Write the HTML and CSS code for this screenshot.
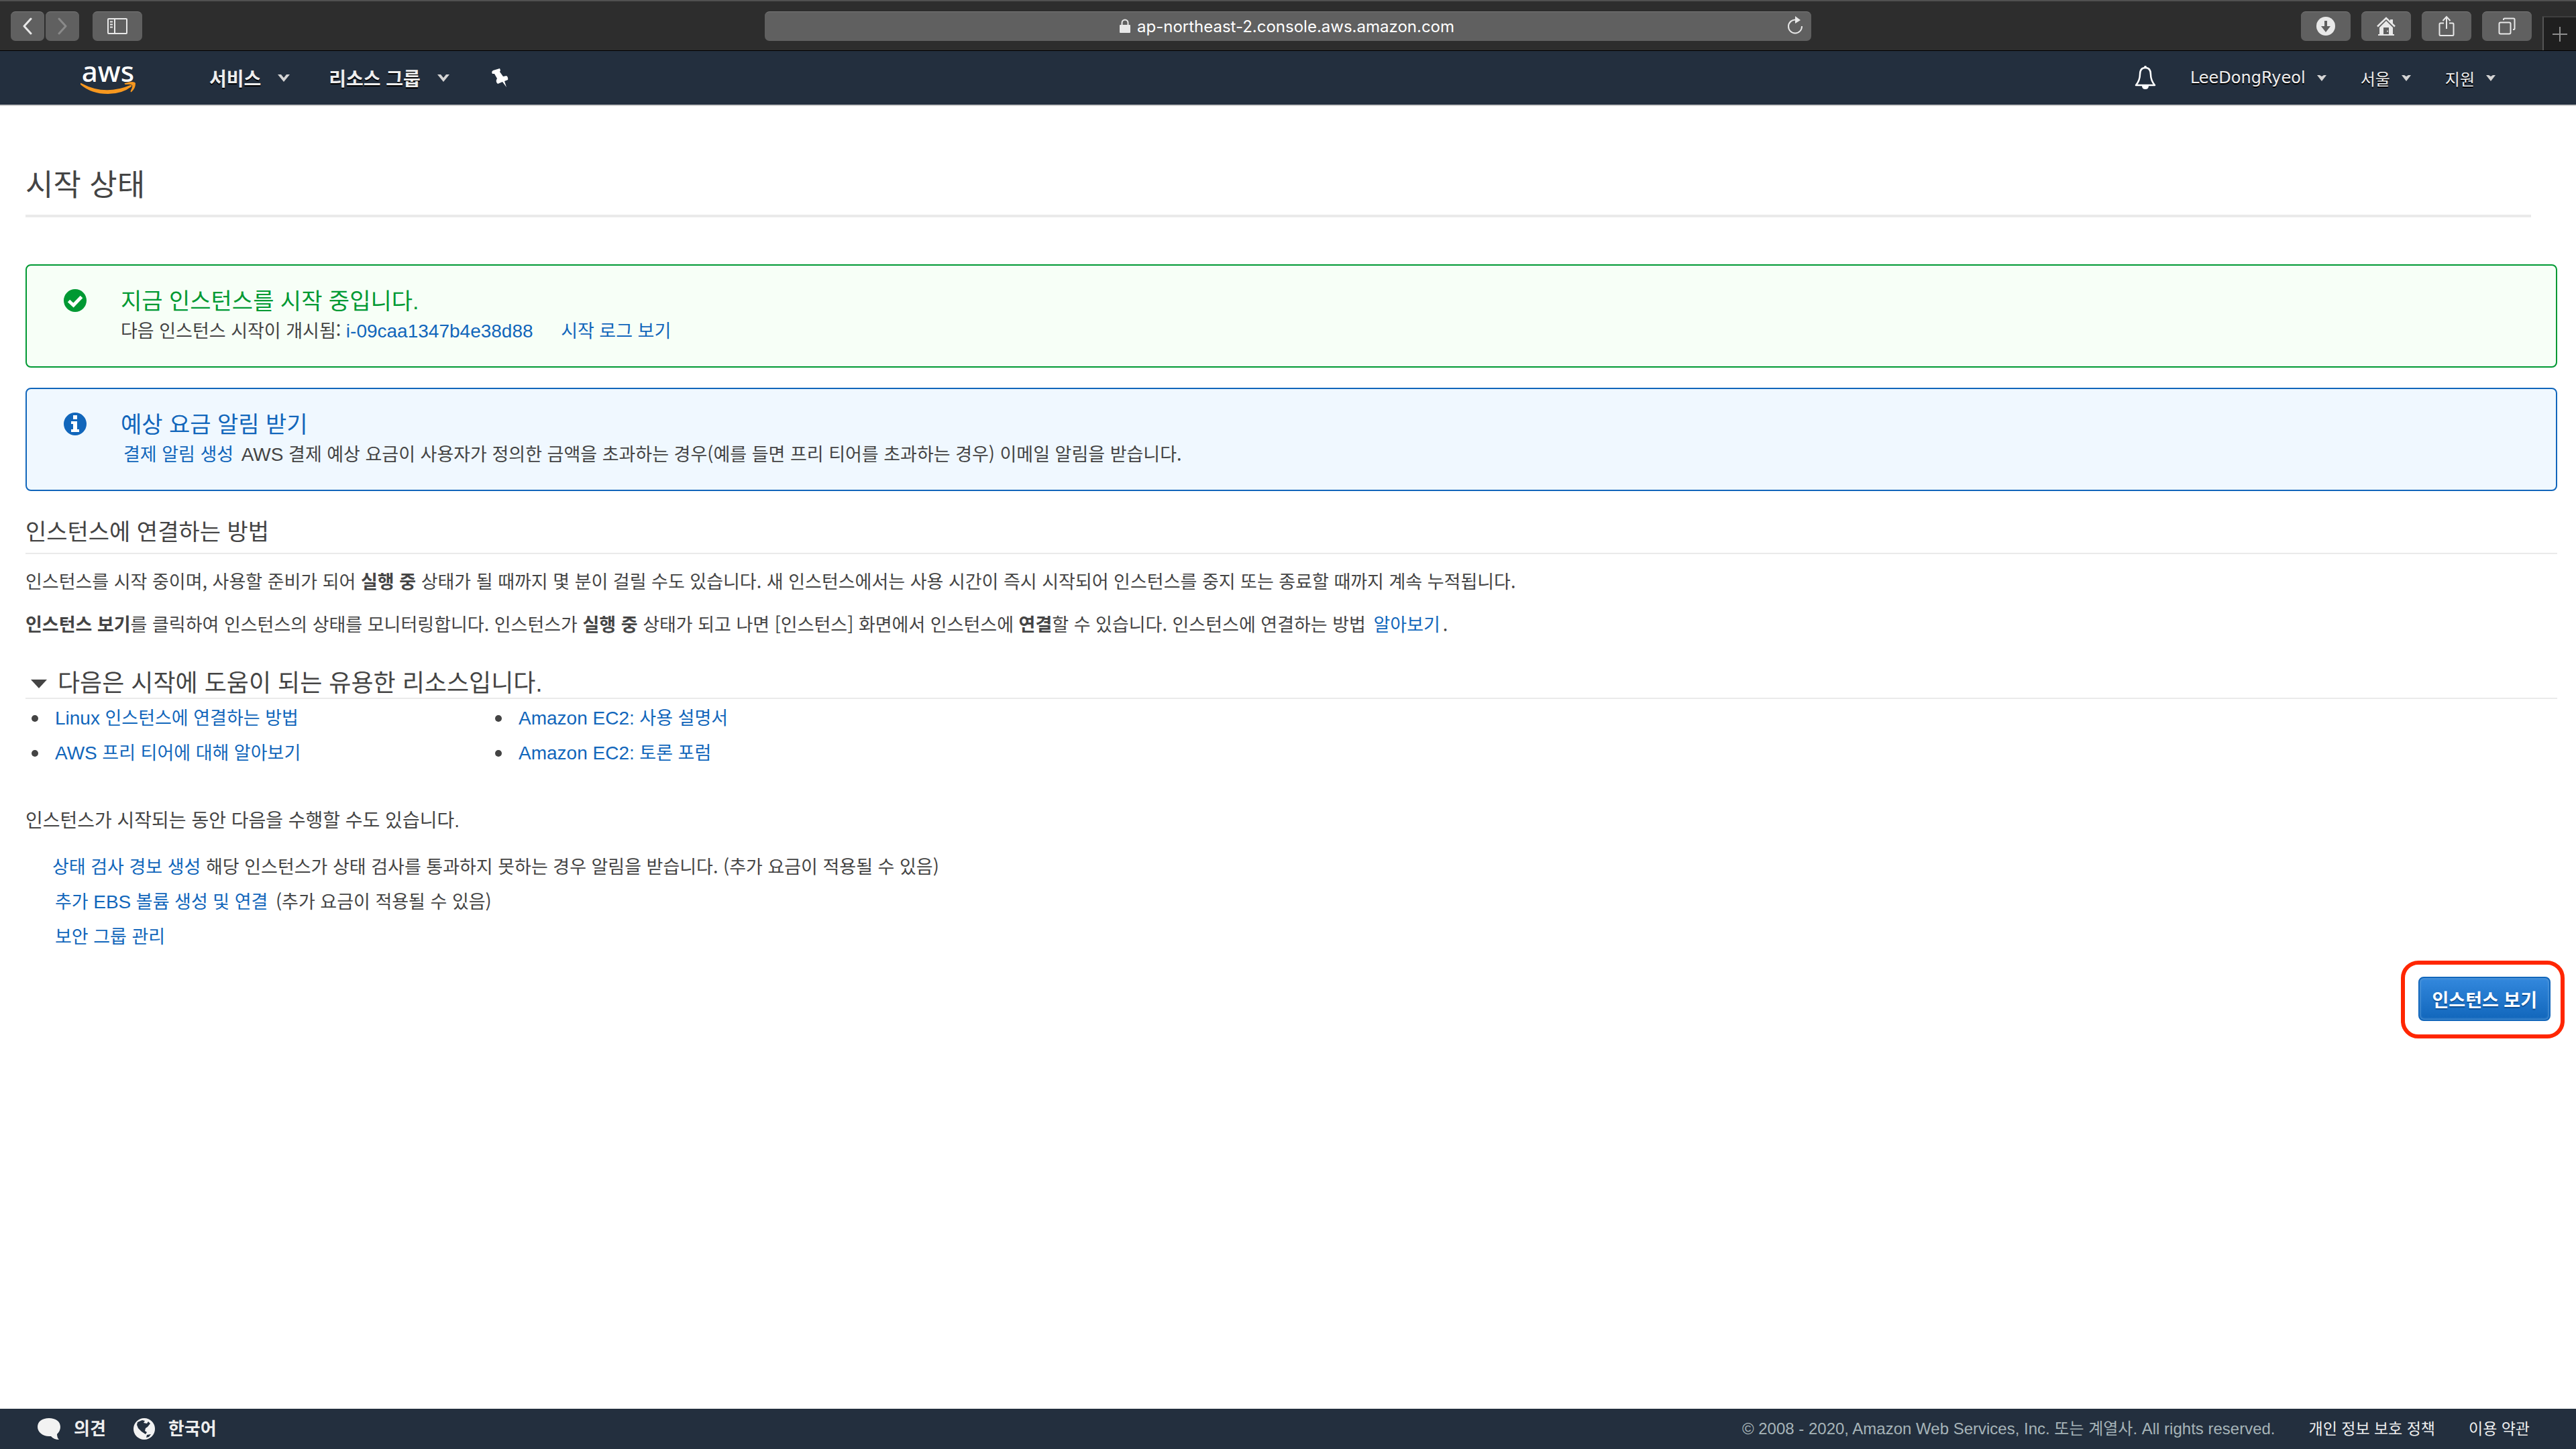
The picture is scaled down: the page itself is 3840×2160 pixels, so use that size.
FILE: index.html
```
<!DOCTYPE html>
<html lang="ko">
<head>
    <meta charset="UTF-8">
    <meta name="viewport" content="width=device-width, initial-scale=1.0">
    <title>시작 상태</title>
    <link rel="stylesheet" href="styles.css">
</head>
<body>
    <!-- Browser toolbar -->
    <div class="toolbar">
        <div class="tool-group">
            <div class="history">
                <button class="tool-btn nav" aria-label="Back">
                    <svg width="16" height="26" viewBox="0 0 16 26"><path d="M13 2L3 13L13 24" fill="none" stroke="#e8e8e8" stroke-width="3" stroke-linecap="round" stroke-linejoin="round"/></svg>
                </button>
                <button class="tool-btn nav" aria-label="Forward">
                    <svg width="16" height="26" viewBox="0 0 16 26"><path d="M3 2L13 13L3 24" fill="none" stroke="#8a8a8a" stroke-width="3" stroke-linecap="round" stroke-linejoin="round"/></svg>
                </button>
            </div>
            <button class="tool-btn" aria-label="Sidebar">
                <svg width="30" height="24" viewBox="0 0 30 24" fill="none" stroke="#e8e8e8" stroke-width="2"><rect x="1" y="1" width="28" height="22" rx="1"/><path d="M11 1V23M4 5.500H8M4 9.500H8M4 13.500H8"/></svg>
            </button>
        </div>
        <div class="address">
            <svg class="lock" width="16" height="22" viewBox="0 0 16 22"><rect x="0" y="9" width="16" height="12" rx="1" fill="#e8e8e8"/><path d="M3.500 10V6a4.500 4.500 0 0 1 9 0V10" fill="none" stroke="#e8e8e8" stroke-width="2"/></svg>
            <input class="url" type="text" value="ap-northeast-2.console.aws.amazon.com" aria-label="Address">
            <button class="reload" aria-label="Reload">
                <svg width="24" height="28" viewBox="0 0 24 28"><path d="M13 5.500A10 10 0 1 0 22 15" fill="none" stroke="#e8e8e8" stroke-width="2"/><path d="M12 0L20 6L12 11Z" fill="#e8e8e8"/></svg>
            </button>
        </div>
        <div class="tool-group right">
            <button class="tool-btn" aria-label="Downloads">
                <svg width="28" height="28" viewBox="0 0 28 28"><circle cx="14" cy="14" r="14" fill="#e8e8e8"/><path d="M12 6H16V14H21L14 23L7 14H12Z" fill="#5f5f5f"/></svg>
            </button>
            <button class="tool-btn" aria-label="Home">
                <svg width="28" height="28" viewBox="0 0 28 28"><path d="M1 14.500L14 2L27 14.500" fill="none" stroke="#e8e8e8" stroke-width="2.500"/><path d="M20 4H24V11L20 7ZM14 6L24 16V26H26V28H2V26H4V16Z" fill="#e8e8e8"/><path d="M10 16H18V26H10Z" fill="#5f5f5f"/><circle cx="16" cy="21.500" r="1" fill="#e8e8e8"/></svg>
            </button>
            <button class="tool-btn" aria-label="Share">
                <svg width="24" height="32" viewBox="0 0 24 32" fill="none" stroke="#e8e8e8" stroke-width="2"><path d="M8 11.500H3Q1.500 11.500 1.500 13V28.500Q1.500 30 3 30H21Q22.500 30 22.500 28.500V13Q22.500 11.500 21 11.500H16M12 20V2M6.500 8L12 2L17.500 8"/></svg>
            </button>
            <button class="tool-btn" aria-label="Tabs">
                <svg width="26" height="26" viewBox="0 0 26 26" fill="none" stroke="#e8e8e8" stroke-width="2"><rect x="1.500" y="7.500" width="17" height="17" rx="2"/><path d="M8 4V3Q8 1.500 9.500 1.500H23Q24.500 1.500 24.500 3V16.500Q24.500 18 23 18H22"/></svg>
            </button>
            <button class="new-tab" aria-label="New tab">
                <svg width="22" height="22" viewBox="0 0 22 22"><path d="M11 0V22M0 11H22" stroke="#8e8e8e" stroke-width="2"/></svg>
            </button>
        </div>
    </div>

    <!-- Console navigation -->
    <header class="nav-bar">
        <a class="logo" href="#">
            <span class="logo-text">aws</span>
            <svg class="smile" width="82" height="20" viewBox="0 0 82 20" fill="#f7981f"><path d="M1 2Q36 21 74 5Q77 4 76 7Q62 18 41 18Q16 18 0 4Q-1 1 1 2Z"/><path d="M66 2Q80 -2 82 2Q82 10 76 15Q74 16 75 13Q78 7 77 5Q75 3 67 4Q65 3 66 2Z"/></svg>
        </a>
        <nav class="menu">
            <button class="menu-btn">서비스 <svg width="18" height="11" viewBox="0 0 18 11"><path d="M0 0H5L9 5L13 0H18L9 11Z" fill="#d4d4d4"/></svg></button>
            <button class="menu-btn">리소스 그룹 <svg width="18" height="11" viewBox="0 0 18 11"><path d="M0 0H5L9 5L13 0H18L9 11Z" fill="#d4d4d4"/></svg></button>
            <button class="menu-btn pin" aria-label="Pin">
                <svg width="25" height="28" viewBox="0 0 25 28" fill="#fff"><path d="M12 0L13 3L12 5L17 12L22 11Q25 13 24 17L19 19L22 28L16 20L9 23Q6 21 7 17L8 15L4 8L1 8Q-1 5 2 3Z"/></svg>
            </button>
        </nav>
        <div class="account">
            <button class="acc-btn" aria-label="Notifications">
                <svg width="32" height="36" viewBox="0 0 32 36"><path d="M16 3C10 3 8 7 8 13C8 20 6 24 2 29H30C26 24 24 20 24 13C24 7 22 3 16 3Z" fill="none" stroke="#fff" stroke-width="2.500" stroke-linejoin="round"/><circle cx="16" cy="2" r="2" fill="#fff"/><path d="M11 30H21Q21 35 16 35Q11 35 11 30Z" fill="#fff"/></svg>
            </button>
            <button class="acc-btn">LeeDongRyeol <svg width="14" height="9" viewBox="0 0 14 9"><path d="M0 0H4L7 2L10 0H14L7 9Z" fill="#d4d4d4"/></svg></button>
            <button class="acc-btn">서울 <svg width="14" height="9" viewBox="0 0 14 9"><path d="M0 0H4L7 2L10 0H14L7 9Z" fill="#d4d4d4"/></svg></button>
            <button class="acc-btn">지원 <svg width="14" height="9" viewBox="0 0 14 9"><path d="M0 0H4L7 2L10 0H14L7 9Z" fill="#d4d4d4"/></svg></button>
        </div>
    </header>

    <main class="content">
        <h1>시작 상태</h1>

        <section class="alert success">
            <svg class="alert-icon" width="34" height="34" viewBox="0 0 34 34"><circle cx="17" cy="17" r="17" fill="#009933"/><path d="M7.500 17.500L14.500 24L26.500 11.500" fill="none" stroke="#fff" stroke-width="5"/></svg>
            <div>
                <h2 class="alert-title">지금 인스턴스를 시작 중입니다.</h2>
                <p>다음 인스턴스 시작이 개시됨: <a class="latin" href="#">i-09caa1347b4e38d88</a> <a class="log-link" href="#">시작 로그 보기</a></p>
            </div>
        </section>

        <section class="alert info">
            <svg class="alert-icon" width="34" height="34" viewBox="0 0 34 34"><circle cx="17" cy="17" r="17" fill="#1166bb"/><path d="M14 4H20V10H14ZM11 13H20V25H23V29H11V25H14V17H11Z" fill="#fff"/></svg>
            <div>
                <h2 class="alert-title">예상 요금 알림 받기</h2>
                <p><a class="spaced" href="#">결제 알림 생성</a> <span class="latin">AWS</span> 결제 예상 요금이 사용자가 정의한 금액을 초과하는 경우(예를 들면 프리 티어를 초과하는 경우) 이메일 알림을 받습니다.</p>
            </div>
        </section>

        <h2 class="section-title">인스턴스에 연결하는 방법</h2>
        <p>인스턴스를 시작 중이며, 사용할 준비가 되어 <b>실행 중</b> 상태가 될 때까지 몇 분이 걸릴 수도 있습니다. 새 인스턴스에서는 사용 시간이 즉시 시작되어 인스턴스를 중지 또는 종료할 때까지 계속 누적됩니다.</p>
        <p><b>인스턴스 보기</b>를 클릭하여 인스턴스의 상태를 모니터링합니다. 인스턴스가 <b>실행 중</b> 상태가 되고 나면 [인스턴스] 화면에서 인스턴스에 <b>연결</b>할 수 있습니다. 인스턴스에 연결하는 방법 <a class="spaced" href="#">알아보기</a>.</p>

        <details class="resources" open>
            <summary><svg width="24" height="13" viewBox="0 0 24 13"><path d="M0 0H24L12 13Z" fill="#444"/></svg>다음은 시작에 도움이 되는 유용한 리소스입니다.</summary>
            <div class="columns">
                <ul>
                    <li><a href="#"><span class="latin">Linux</span> 인스턴스에 연결하는 방법</a></li>
                    <li><a href="#"><span class="latin">AWS</span> 프리 티어에 대해 알아보기</a></li>
                </ul>
                <ul>
                    <li><a href="#"><span class="latin">Amazon EC2:</span> 사용 설명서</a></li>
                    <li><a href="#"><span class="latin">Amazon EC2:</span> 토론 포럼</a></li>
                </ul>
            </div>
        </details>

        <p class="lead">인스턴스가 시작되는 동안 다음을 수행할 수도 있습니다.</p>
        <ul class="tasks">
            <li><a href="#">상태 검사 경보 생성</a> 해당 인스턴스가 상태 검사를 통과하지 못하는 경우 알림을 받습니다. (추가 요금이 적용될 수 있음)</li>
            <li><a class="spaced" href="#">추가 <span class="latin">EBS</span> 볼륨 생성 및 연결</a> (추가 요금이 적용될 수 있음)</li>
            <li><a class="spaced" href="#">보안 그룹 관리</a></li>
        </ul>
    </main>

    <div class="actions">
        <div class="highlight">
            <button class="primary">인스턴스 보기</button>
        </div>
    </div>

    <footer class="footer">
        <a class="foot-btn" href="#">
            <svg width="34" height="34" viewBox="0 0 34 34" fill="#f2f2f2"><path d="M17 1C7 1 0 6 0 14C0 22 8 28 17 28L20 28Q24 33 32 33Q29 30 29 25Q34 20 34 14C34 6 27 1 17 1Z"/></svg>
            의견
        </a>
        <a class="foot-btn" href="#">
            <svg width="32" height="32" viewBox="0 0 32 32"><circle cx="16" cy="16" r="16" fill="#f2f2f2"/><path d="M6 6L13 3L17 4L15 7L20 8L22 5L25 8L21 13L18 15L17 19L20 21L18 24L12 20L7 15L5 10ZM20 25L26 24L23 28L19 29Z" fill="#232f3e"/></svg>
            한국어
        </a>
        <span class="copyright">© 2008 - 2020, Amazon Web Services, Inc. 또는 계열사. All rights reserved.</span>
        <a class="policy" href="#">개인 정보 보호 정책</a>
        <a class="policy" href="#">이용 약관</a>
    </footer>
</body>
</html>
```
FILE: styles.css
```
* {
    box-sizing: border-box;
}
body {
    margin: 0;
    min-height: 100vh;
    display: flex;
    flex-direction: column;
    background-color: #fff;
    color: #444;
    font-family: "Liberation Sans", "Noto Sans CJK KR", sans-serif;
    font-size: 26px;
    line-height: 40px;
}
a {
    color: #1166bb;
    text-decoration: none;
}
button {
    font-family: inherit;
    border: 0;
    padding: 0;
    background: none;
    cursor: pointer;
}
svg {
    display: block;
    flex: none;
}
h1, h2, p, ul {
    margin: 0;
    padding: 0;
    font-weight: normal;
}
p, li {
    font-family: "Noto Sans CJK KR", sans-serif;
    font-size: 27px;
}
/* Latin words sit inside Korean text, line-height 1 keeps the row height */
.latin {
    font-family: "Liberation Sans", sans-serif;
    font-size: 28px;
    line-height: 1;
}

/* Browser toolbar */
.toolbar {
    display: flex;
    align-items: center;
    height: 76px;
    padding-left: 16px;
    background-color: #2d2d2d;
    border-top: 2px solid #505050;
    border-bottom: 1px solid #000;
}
.tool-group {
    flex: 1;
    display: flex;
    align-items: center;
    gap: 20px;
}
.tool-group.right {
    justify-content: flex-end;
    gap: 16px;
    align-self: stretch;
}
.history {
    display: flex;
    gap: 2px;
}
.tool-btn {
    display: flex;
    align-items: center;
    justify-content: center;
    width: 74px;
    height: 44px;
    border-radius: 7px;
    background-color: #606060;
    border-top: 1px solid #7a7a7a;
}
.tool-btn.nav {
    width: 50px;
}
.address {
    display: flex;
    align-items: center;
    justify-content: center;
    gap: 10px;
    position: relative;
    width: 1560px;
    height: 44px;
    margin-right: 16px;
    border-radius: 7px;
    background-color: #606060;
    border-top: 1px solid #7a7a7a;
}
.url {
    width: 476px;
    padding: 0;
    border: 0;
    background: none;
    color: #fff;
    font-family: Inter, sans-serif;
    font-size: 24px;
}
.reload {
    position: absolute;
    right: 12px;
    top: 6px;
}
.new-tab {
    display: flex;
    align-items: center;
    justify-content: center;
    width: 50px;
    height: 51px;
    align-self: flex-end;
    background-color: #1f1f1f;
    border-top: 2px solid #3e3e3e;
    border-left: 2px solid #555;
}

/* Console navigation */
.nav-bar {
    display: flex;
    align-items: center;
    height: 82px;
    padding: 0 120px;
    background-color: #232f3e;
    border-bottom: 2px solid #ccc;
}
.logo {
    display: flex;
    flex-direction: column;
    align-items: center;
    width: 82px;
    margin-right: 110px;
    color: #fff;
}
.logo-text {
    font-family: "Noto Sans", sans-serif;
    font-size: 42px;
    font-weight: 500;
    line-height: 32px;
}
.menu, .account {
    display: flex;
    align-items: center;
}
.menu {
    gap: 58px;
}
.menu-btn, .acc-btn {
    display: flex;
    align-items: center;
    color: #eee;
    text-shadow: 0 2px 0 #000;
}
.menu-btn {
    gap: 25px;
    font-size: 28px;
    font-weight: bold;
}
.pin {
    margin-left: 5px;
}
.account {
    margin-left: auto;
    gap: 51px;
}
.acc-btn {
    gap: 17px;
    font-family: "DejaVu Sans", "Noto Sans CJK KR", sans-serif;
    font-size: 24px;
}

/* Page content */
.content {
    padding: 89px 28px 0 38px;
}
h1 {
    margin-right: 39px;
    padding-bottom: 13px;
    border-bottom: 4px solid #eaeaea;
    font-size: 45px;
    line-height: 60px;
}
.alert {
    display: flex;
    margin-top: 30px;
    padding: 33px 55px 34px;
    border: 2px solid;
    border-radius: 8px;
}
h1 + .alert {
    margin-top: 70px;
}
.alert.success {
    border-color: #009933;
    background-color: #f7fff7;
}
.alert.info {
    border-color: #1166bb;
    background-color: #f0f8ff;
}
.alert-icon {
    margin: 2px 51px 0 0;
}
.alert-title {
    margin-bottom: 3px;
    font-size: 34px;
}
.success .alert-title {
    color: #009933;
}
.info .alert-title {
    color: #1166bb;
}
.log-link {
    margin-left: 34px;
}
.spaced {
    margin: 0 4px;
}
.section-title {
    margin-top: 39px;
    padding-bottom: 9px;
    border-bottom: 2px solid #eaeaea;
    font-size: 34px;
    line-height: 44px;
}
.section-title + p {
    margin: 20px 0 24px;
}
.resources {
    margin-top: 48px;
}
summary {
    display: flex;
    align-items: center;
    gap: 16px;
    padding-left: 8px;
    border-bottom: 2px solid #eaeaea;
    font-size: 36px;
    line-height: 42px;
    list-style: none;
}
.columns {
    display: flex;
    margin-top: 1px;
    line-height: 52px;
}
.columns ul {
    width: 691px;
    padding-left: 9px;
}
.columns li {
    display: flex;
    align-items: center;
    gap: 25px;
}
.columns li::before {
    content: "";
    width: 10px;
    height: 10px;
    margin-top: 4px;
    border-radius: 50%;
    background-color: #444;
}
.lead {
    margin-top: 57px;
    font-family: "Liberation Sans", "Noto Sans CJK KR", sans-serif;
    font-size: 28px;
}
.tasks {
    margin-top: 21px;
    padding-left: 40px;
    line-height: 52px;
    list-style: none;
}

/* Launch button */
.actions {
    display: flex;
    justify-content: flex-end;
    margin-top: 11px;
    padding-right: 17px;
}
.highlight {
    padding: 18px 15px 20px 20px;
    border: 6px solid #ff2600;
    border-radius: 26px;
}
.primary {
    height: 66px;
    padding: 0 18px;
    border: 2px solid #1166bb;
    border-radius: 8px;
    background: linear-gradient(#3388dd, #1166bb);
    box-shadow: inset 0 0 3px 1px #5a9bd8;
    color: #fff;
    font-size: 27px;
    font-weight: bold;
    text-shadow: 0 2px 1px #0f4f94;
}

/* Footer */
.footer {
    display: flex;
    align-items: center;
    height: 60px;
    margin-top: auto;
    padding: 0 69px 0 56px;
    background-color: #232f3e;
}
.foot-btn {
    display: flex;
    align-items: center;
    gap: 20px;
    margin-right: 41px;
    color: #eee;
    font-weight: bold;
}
.copyright {
    margin-left: auto;
    color: #a6b4b8;
    font-size: 24px;
}
.policy {
    margin-left: 50px;
    color: #eee;
    font-size: 23px;
}
```
